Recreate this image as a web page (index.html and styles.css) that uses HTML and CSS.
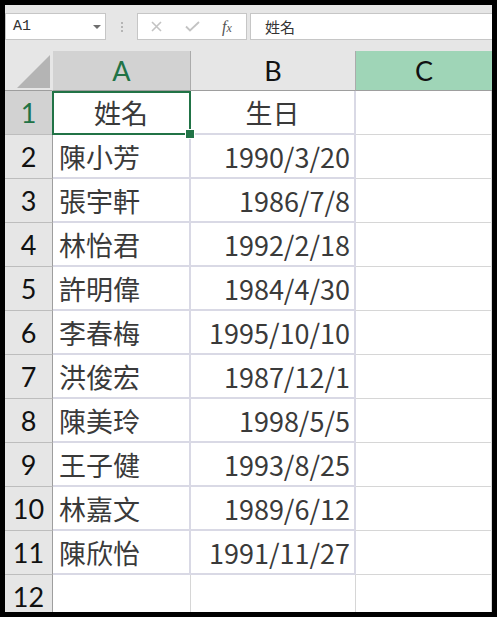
FILE: index.html
```html
<!DOCTYPE html>
<html lang="zh-Hant">
<head>
  <meta charset="UTF-8">
  <title>生日表</title>
  <link rel="stylesheet" href="styles.css">
</head>
<body>
  <div class="window">
    <!-- 名稱方塊 + 資料編輯列 -->
    <div class="toolbar">
      <div class="name-box">
        <span class="cell-ref">A1</span>
        <span class="caret"></span>
      </div>
      <div class="grip"><i></i><i></i><i></i></div>
      <div class="fx-buttons">
        <svg class="btn-cancel" width="11" height="11" viewBox="0 0 11 11">
          <path d="M1 1 L10 10 M10 1 L1 10" stroke="#c3c3c3" stroke-width="1.6" fill="none"/>
        </svg>
        <svg class="btn-enter" width="15" height="11" viewBox="0 0 15 11">
          <path d="M1 5.5 L5 9.5 L14 1" stroke="#c3c3c3" stroke-width="1.8" fill="none"/>
        </svg>
        <span class="fx">f<span class="fx-x">x</span></span>
      </div>
      <div class="formula">姓名</div>
    </div>

    <div class="sheet">
      <div class="corner">
        <svg width="34" height="34" viewBox="0 0 34 34"><polygon points="0,33 33,0 33,33" fill="#b4b4b4"/></svg>
      </div>
      <div class="col-head active">A</div>
      <div class="col-head">B</div>
      <div class="col-head hover">C</div>

      <div class="row-head active">1</div>
      <div class="cell tbl center selected">姓名</div>
      <div class="cell tbl center">生日</div>
      <div class="cell"></div>

      <div class="row-head">2</div>
      <div class="cell tbl">陳小芳</div>
      <div class="cell tbl num">1990/3/20</div>
      <div class="cell"></div>

      <div class="row-head">3</div>
      <div class="cell tbl">張宇軒</div>
      <div class="cell tbl num">1986/7/8</div>
      <div class="cell"></div>

      <div class="row-head">4</div>
      <div class="cell tbl">林怡君</div>
      <div class="cell tbl num">1992/2/18</div>
      <div class="cell"></div>

      <div class="row-head">5</div>
      <div class="cell tbl">許明偉</div>
      <div class="cell tbl num">1984/4/30</div>
      <div class="cell"></div>

      <div class="row-head">6</div>
      <div class="cell tbl">李春梅</div>
      <div class="cell tbl num">1995/10/10</div>
      <div class="cell"></div>

      <div class="row-head">7</div>
      <div class="cell tbl">洪俊宏</div>
      <div class="cell tbl num">1987/12/1</div>
      <div class="cell"></div>

      <div class="row-head">8</div>
      <div class="cell tbl">陳美玲</div>
      <div class="cell tbl num">1998/5/5</div>
      <div class="cell"></div>

      <div class="row-head">9</div>
      <div class="cell tbl">王子健</div>
      <div class="cell tbl num">1993/8/25</div>
      <div class="cell"></div>

      <div class="row-head">10</div>
      <div class="cell tbl">林嘉文</div>
      <div class="cell tbl num">1989/6/12</div>
      <div class="cell"></div>

      <div class="row-head">11</div>
      <div class="cell tbl">陳欣怡</div>
      <div class="cell tbl num">1991/11/27</div>
      <div class="cell"></div>

      <div class="row-head">12</div>
      <div class="cell"></div>
      <div class="cell"></div>
      <div class="cell"></div>
    </div>
  </div>
</body>
</html>
```

FILE: styles.css
```css
* {
  box-sizing: border-box;
}

body {
  margin: 0;
  padding: 5px;
  height: 617px;
  background-color: #000; /* 截圖外框 */
}

.window {
  width: 487px;
  height: 607px;
  background-color: #fff;
  overflow: hidden;
}

/* ---------- 上方工具列 ---------- */
.toolbar {
  height: 46px;
  padding-top: 8px;
  display: flex;
  align-items: flex-start;
  background-color: #e6e6e6;
}

.name-box {
  width: 101px;
  height: 27px;
  padding-left: 7px;
  display: flex;
  align-items: center;
  background-color: #fff;
  border: 1px solid #c6c6c6;
}

.cell-ref {
  font-family: "Liberation Mono", monospace;
  font-size: 15px;
  color: #333;
}

.caret {
  margin-left: auto;
  margin-right: 4px;
  width: 0;
  height: 0;
  border-left: 4px solid transparent;
  border-right: 4px solid transparent;
  border-top: 4px solid #6e6e6e;
}

.grip {
  width: 31px;
  height: 27px;
  display: flex;
  flex-direction: column;
  align-items: center;
  justify-content: center;
  gap: 2px;
}

.grip i {
  width: 2px;
  height: 2px;
  background-color: #b5b5b5;
}

.fx-buttons {
  width: 110px;
  height: 27px;
  display: flex;
  align-items: center;
  background-color: #fff;
  border: 1px solid #c6c6c6;
}

.btn-cancel {
  margin-left: 13px;
}

.btn-enter {
  margin-left: 23px;
}

.fx {
  margin-left: 22px;
  font-family: "Liberation Serif", serif;
  font-style: italic;
  font-size: 16px;
  color: #555;
}

.fx-x {
  font-size: 12px;
}

.formula {
  flex: 1;
  height: 27px;
  margin-left: 3px;
  padding-left: 14px;
  display: flex;
  align-items: center;
  font-family: "Noto Sans CJK TC", sans-serif;
  font-size: 15px;
  color: #333;
  background-color: #fff;
  border: 1px solid #c6c6c6;
  border-right: none;
}

/* ---------- 工作表 ---------- */
.sheet {
  display: grid;
  grid-template-columns: 48px 138px 165px 136px;
  grid-template-rows: 40px repeat(12, 44px);
}

.corner {
  padding: 4px 0 0 12px;
  background-color: #e6e6e6;
  border-bottom: 1px solid #9e9e9e;
  border-right: 1px solid #e6e6e6;
}

.corner svg {
  display: block;
}

.col-head,
.row-head {
  display: flex;
  align-items: center;
  justify-content: center;
  font-family: "Lato", "Liberation Sans", sans-serif;
  font-size: 27px;
  color: #111;
  background-color: #e6e6e6;
}

.col-head {
  border-bottom: 1px solid #9e9e9e;
  border-right: 1px solid #ababab;
}

.col-head.active {
  background-color: #d2d2d2;
  color: #217346;
}

.col-head.hover {
  background-color: #9fd5b7; /* 滑鼠停留的欄 */
  border-right: none;
}

.row-head {
  border-right: 1px solid #9e9e9e;
  border-bottom: 1px solid #bdbdbd;
}

.row-head.active {
  background-color: #d2d2d2;
  color: #217346;
}

.cell {
  display: flex;
  align-items: center;
  padding: 0 6px;
  font-family: "Noto Sans CJK TC", sans-serif;
  font-size: 27px;
  line-height: 1;
  color: #3a3a3a;
  border-right: 1px solid #d6d6d6;
  border-bottom: 1px solid #d6d6d6;
}

.cell.tbl {
  border-right: 2px solid #d9d9e5;
  border-bottom: 2px solid #d9d9e5;
}

.cell.center {
  justify-content: center;
}

.cell.num {
  justify-content: flex-end;
  padding-right: 4px;
}

/* 選取中的儲存格 A1 */
.selected {
  position: relative;
}

.selected::before {
  content: "";
  position: absolute;
  left: -1px;
  top: 0;
  right: -2px;
  bottom: -2px;
  border: 2px solid #217346;
}

.selected::after {
  content: "";
  position: absolute;
  right: -6px;
  bottom: -6px;
  width: 8px;
  height: 8px;
  background-color: #217346;
  border: 1px solid #fff;
}
```
